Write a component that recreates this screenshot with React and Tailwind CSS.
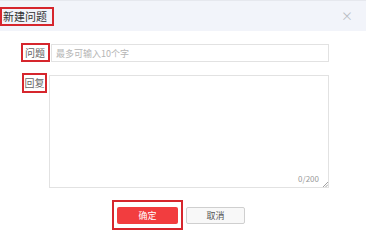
export default function App() {
  const font = { fontFamily: '"Noto Sans CJK SC", "Liberation Sans", sans-serif' };
  return (
    <div className="w-[366px] h-[248px] bg-white overflow-hidden" style={font}>
      <div className="h-[31px] bg-[#f2f4fa] border-t border-[#e6e8ee] flex items-center justify-between">
        <div className="h-[19px] border-2 border-[#d6262d] flex items-center pl-[1px] pr-[5px] text-[11px] text-[#333] leading-none">
          新建问题
        </div>
        <span className="mr-[13px] text-[12px] text-[#b8bcc4] leading-none">×</span>
      </div>

      <div className="flex items-start mt-[12px] pl-[21px]">
        <div className="w-[29px] h-[19px] border-2 border-[#d6262d] flex items-center justify-end pr-[3px] text-[10px] text-[#666] leading-none">
          问题
        </div>
        <div className="ml-[1px] mt-[1px] w-[278px] h-[18px] border border-[#e2e2e2] flex items-center pl-[4px] text-[9px] text-[#b5b5b5] leading-none">
          最多可输入10个字
        </div>
      </div>

      <div className="flex items-start mt-[11px] pl-[22px]">
        <div className="w-[25px] h-[20px] border-2 border-[#d6262d] flex items-center justify-center text-[10px] text-[#666] leading-none">
          回复
        </div>
        <div className="ml-[2px] mt-[2px] w-[280px] h-[113px] border border-[#e2e2e2] relative">
          <span className="absolute right-[9px] bottom-[4px] text-[8px] text-[#999] leading-none">0/200</span>
          <svg className="absolute right-0 bottom-0" width="6" height="6" viewBox="0 0 6 6">
            <path d="M6 1L1 6M6 3.5L3.5 6" stroke="#888" strokeWidth="0.8" />
          </svg>
        </div>
      </div>

      <div className="flex items-start mt-[12px] pl-[112px]">
        <div className="w-[71px] h-[30px] border-2 border-[#d6262d] flex items-center justify-center">
          <div className="w-[61px] h-[17px] rounded-[2px] bg-[#f23d3f] flex items-center justify-center text-[9px] text-white leading-none">
            确定
          </div>
        </div>
        <div className="ml-[3px] mt-[7px] w-[59px] h-[17px] rounded-[2px] border border-[#cfcfcf] bg-[#f8f8f8] flex items-center justify-center text-[9px] text-[#555] leading-none">
          取消
        </div>
      </div>
    </div>
  );
}
